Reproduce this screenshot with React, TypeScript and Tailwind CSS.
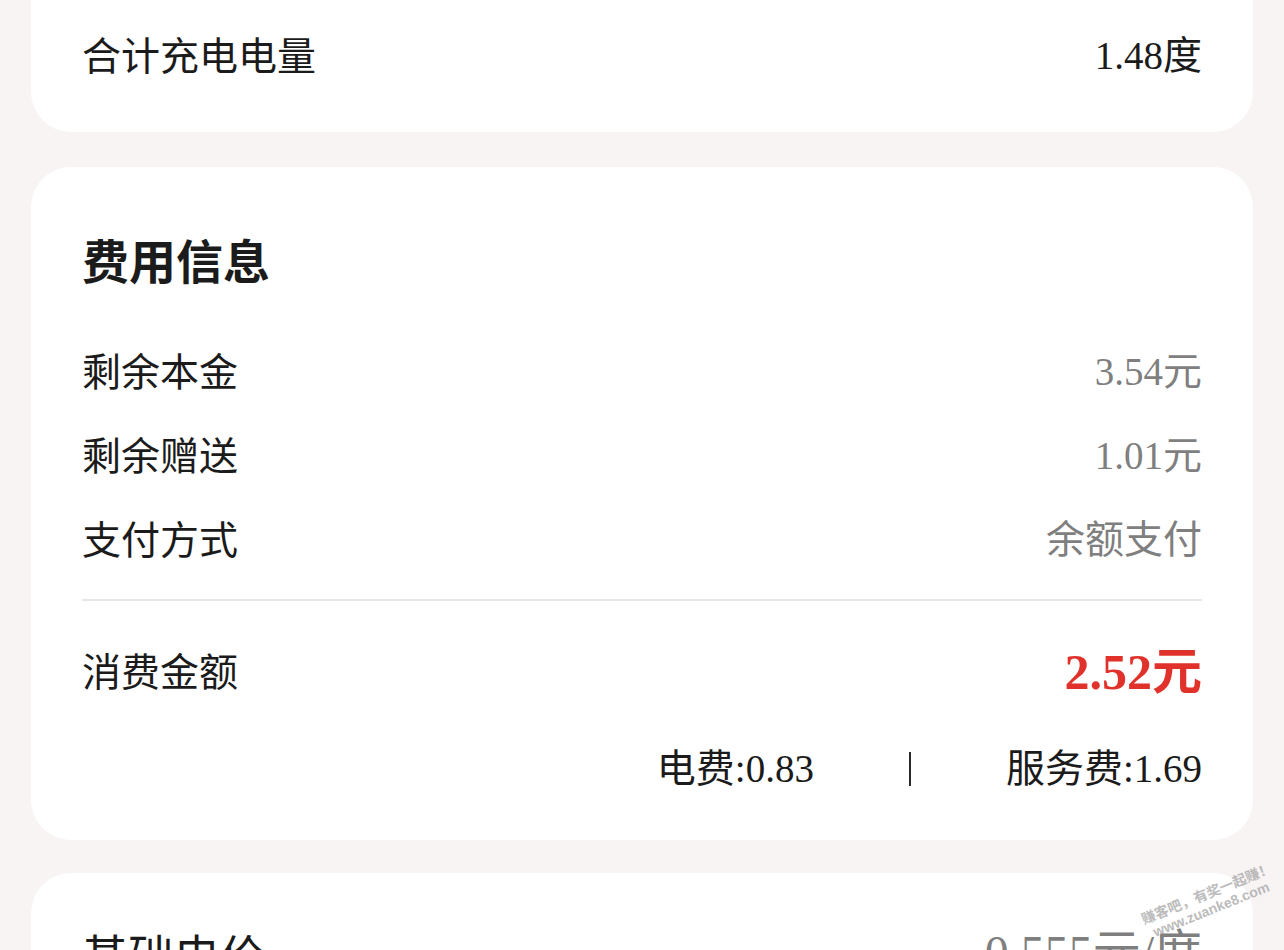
import React from 'react'

interface RowProps {
  label: string
  value: string
  muted?: boolean
}

const Row = ({ label, value, muted }: RowProps) => {
  return (
    <div className="flex h-[84px] items-center justify-between">
      <span className="pb-[5px] font-['Noto_Sans_CJK_SC',sans-serif] text-[39px] text-[#1b1b1b]">{label}</span>
      <span
        className={
          muted
            ? "font-['Liberation_Serif','Noto_Sans_CJK_SC',serif] text-[39px] text-[#7f7f7f]"
            : "font-['Liberation_Serif','Noto_Sans_CJK_SC',serif] text-[39px] text-[#1b1b1b]"
        }
      >
        {value}
      </span>
    </div>
  )
}

const App = () => {
  return (
    <div className="relative h-[950px] w-full overflow-hidden bg-[#f8f4f4] px-[31px]">
      {/* 充电信息 (bottom of card) */}
      <div className="-mt-[40px] rounded-[40px] bg-white px-[51px] pt-[54px] pb-[34px]">
        <Row label="合计充电电量" value="1.48度" />
      </div>

      {/* 费用信息 */}
      <div className="mt-[35px] rounded-[40px] bg-white px-[51px] pt-[62px] pb-[32px]">
        <h2 className="mb-[41px] h-[60px] font-['Noto_Sans_CJK_SC',sans-serif] text-[47px] leading-[60px] font-bold text-[#1b1b1b]">
          费用信息
        </h2>
        <Row label="剩余本金" value="3.54元" muted />
        <Row label="剩余赠送" value="1.01元" muted />
        <Row label="支付方式" value="余额支付" muted />
        <div className="mt-[17px] h-[2px] bg-[#e6e6e6]" />
        <div className="mt-[31px] flex h-[80px] items-center justify-between">
          <span className="pb-[5px] font-['Noto_Sans_CJK_SC',sans-serif] text-[39px] text-[#1b1b1b]">消费金额</span>
          <span className="font-['Liberation_Serif','Noto_Sans_CJK_SC',serif] text-[50px] font-bold text-[#e0322a]">2.52元</span>
        </div>
        <div className="mt-[18px] flex h-[78px] items-center justify-end gap-[95px] font-['Liberation_Serif','Noto_Sans_CJK_SC',serif] text-[39px] text-[#1b1b1b]">
          <span>电费:0.83</span>
          <span className="h-[34px] w-[2px] bg-[#2a2a2a]" />
          <span>服务费:1.69</span>
        </div>
      </div>

      {/* 基础电价 */}
      <div className="mt-[33px] rounded-[40px] bg-white px-[51px] pt-[48px] pb-[40px]">
        <div className="flex h-[64px] items-center justify-between">
          <span className="font-['Noto_Sans_CJK_SC',sans-serif] text-[46px] text-[#1b1b1b]">基础电价</span>
          <span className="font-['Liberation_Serif','Noto_Sans_CJK_SC',serif] text-[48px] text-[#7f7f7f]">0.555元/度</span>
        </div>
      </div>

      {/* watermark */}
      <div className="pointer-events-none absolute top-[884px] left-[1140px] -rotate-[22deg] font-['Noto_Sans_CJK_SC',sans-serif] text-[14px] leading-[17px] font-bold text-[#a0a0a0] opacity-70">
        <div>赚客吧，有奖一起赚！</div>
        <div className="pl-[6px] font-['Liberation_Sans',sans-serif]">www.zuanke8.com</div>
      </div>
    </div>
  )
}

export default App
